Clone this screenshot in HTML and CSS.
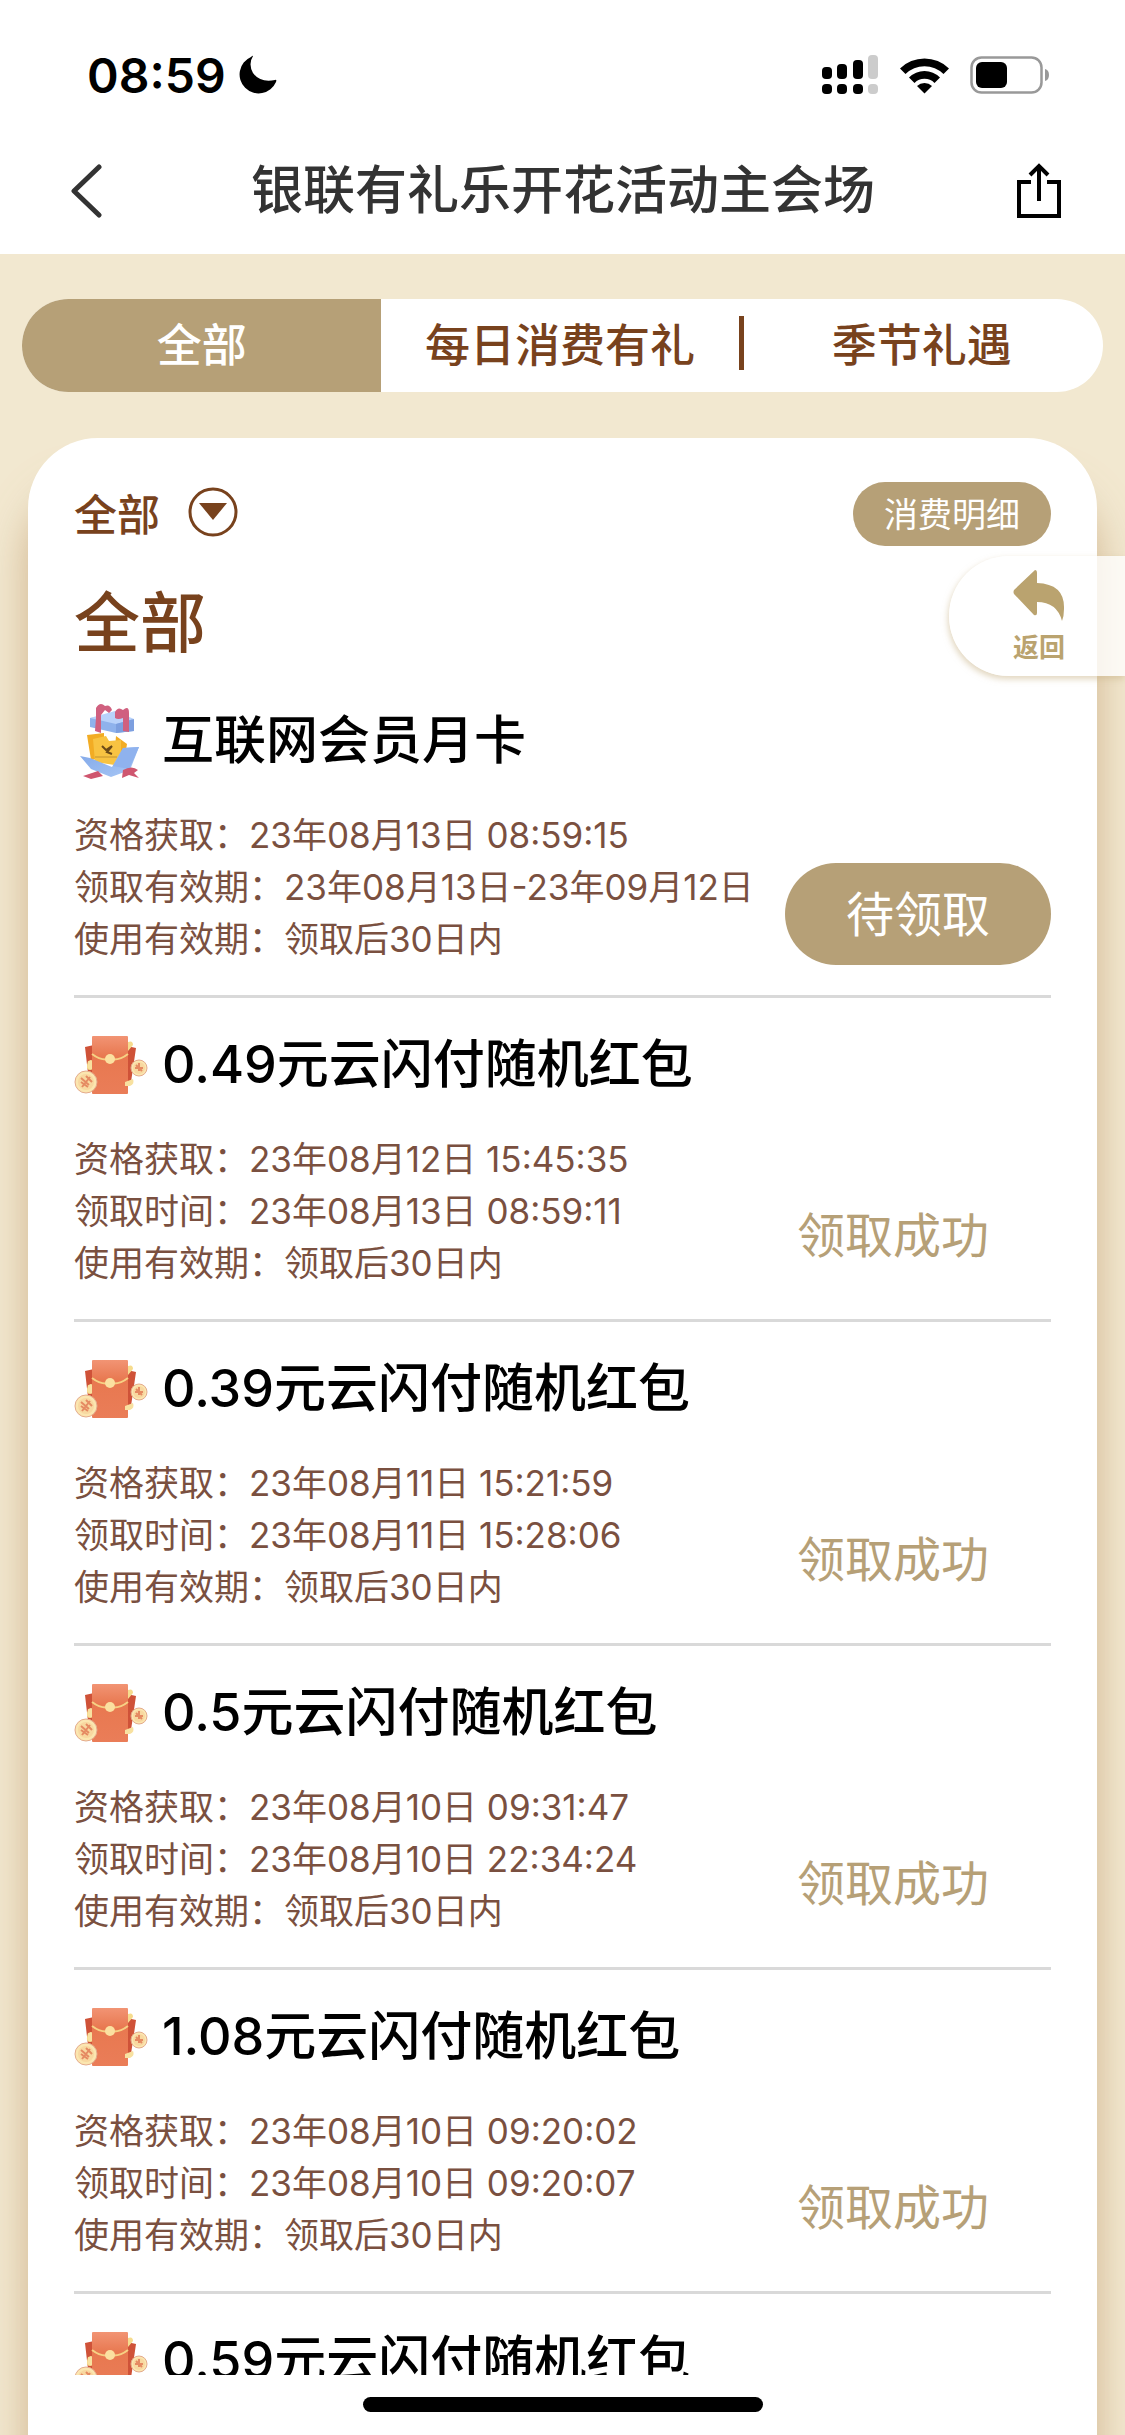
FILE: index.html
```html
<!DOCTYPE html>
<html lang="zh-CN">
<head>
<meta charset="utf-8">
<meta name="viewport" content="width=device-width">
<title>银联有礼乐开花活动主会场</title>
<link rel="stylesheet" href="styles.css">
</head>
<body>
<svg class="symbols" aria-hidden="true">
  <defs>
    <linearGradient id="red" x1="0" y1="0" x2="0" y2="1"><stop offset="0" stop-color="#f29474"/><stop offset=".35" stop-color="#e87850"/><stop offset="1" stop-color="#ea7d58"/></linearGradient>
    <linearGradient id="box" x1="0" y1="0" x2="1" y2="1"><stop offset="0" stop-color="#7fa6e8"/><stop offset="1" stop-color="#a9c8f6"/></linearGradient>
    <symbol id="packet" viewBox="0 0 74 60">
      <path d="M11 12 20 10V50H17Q15 50 15 47Z" fill="#cf5238"/>
      <path d="M62 13 53 11V50H55Q57 50 57 47Z" fill="#cf5238"/>
      <path d="M54 7q5-2 5 3l-5 6zM14 26q-3 9 2 9l4-1v-9z" fill="#f6dc8e"/>
      <rect x="18" y="1" width="36" height="58" rx="1" fill="url(#red)"/>
      <path d="M18 19Q27 26 36 24Q45 26 54 19" fill="none" stroke="#f6d184" stroke-width="2"/>
      <circle cx="36" cy="24" r="5" fill="#fbe0a0"/>
      <path d="M14 27q4-4 4 0v7q-3 1-4-2zM51 47l8-3q2 5-3 7h-5z" fill="#f8e1a0"/>
      <circle cx="12" cy="47" r="11" fill="#fbe6b0" stroke="#e4ab8c"/>
      <circle cx="12" cy="47" r="8" fill="#f8d8a0"/>
      <path d="M7 43l8 7M7 47l7 5M12 41l6 6M8 52l8-10" stroke="#e58a62" stroke-width="2"/>
      <circle cx="65" cy="33" r="8" fill="#fbe6b0" stroke="#e4ab8c"/>
      <circle cx="65" cy="33" r="6" fill="#f8d8a0"/>
      <path d="M61 33h8M62 30l6 6M65 28v8" stroke="#e58a62" stroke-width="2"/>
    </symbol>
  </defs>
</svg>

<header class="top">
  <div class="statusbar">
    <div class="clock">
      <span>08:59</span>
      <svg width="40" height="40" viewBox="0 0 40 40"><path d="M15 1Q10 9 15 18Q22 28 37 25Q39 24 38 27A19 19 0 1 1 13 2Q15 0 15 1Z"/></svg>
    </div>
    <div class="indicators">
      <svg width="57" height="40" viewBox="0 0 57 40">
        <rect x="0" y="12" width="10" height="12" rx="4"/><rect x="15" y="9" width="10" height="15" rx="4"/><rect x="31" y="5" width="10" height="19" rx="4"/>
        <rect x="0" y="29" width="10" height="10" rx="4"/><rect x="15" y="29" width="10" height="10" rx="4"/><rect x="31" y="29" width="10" height="10" rx="4"/>
        <g fill="#ccc"><rect x="46" y="0" width="10" height="24" rx="4"/><rect x="46" y="29" width="10" height="10" rx="4"/></g>
      </svg>
      <svg width="49" height="37" viewBox="0 0 49 37">
        <path d="M0 11.500A35 35 0 0 1 49 11.500L43.500 17A27 27 0 0 0 5.500 17Z"/>
        <path d="M9 20.500A22 22 0 0 1 40 20.500L34.500 26A14 14 0 0 0 14.500 26Z"/>
        <path d="M17 29A11 11 0 0 1 32 29L24.500 36.500Z"/>
      </svg>
      <svg width="80" height="38" viewBox="0 0 80 38">
        <rect x="1.500" y="1.500" width="70" height="35" rx="10" fill="none" stroke="#999" stroke-width="2.500"/>
        <rect x="6" y="6" width="31" height="26" rx="6"/>
        <path d="M75 13Q79 14 79 19T75 25Z" fill="#999"/>
      </svg>
    </div>
  </div>
  <nav class="titlebar">
    <button class="bare" aria-label="后退"><svg width="32" height="54" viewBox="0 0 32 54" fill="none" stroke="#333" stroke-width="5" stroke-linecap="round" stroke-linejoin="round"><path d="M29 3 4 27 29 51"/></svg></button>
    <h1>银联有礼乐开花活动主会场</h1>
    <button class="bare" aria-label="分享"><svg width="46" height="56" viewBox="0 0 46 56" fill="none" stroke="#000" stroke-width="4"><path d="M15 19H3V53H43V19H31"/><path d="M23 38V3M14 12 23 3 32 12"/></svg></button>
  </nav>
</header>

<main>
  <nav class="tabs">
    <button class="tab active">全部</button>
    <button class="tab">每日消费有礼</button>
    <button class="tab">季节礼遇</button>
  </nav>

  <section class="card">
    <div class="filters">
      <button class="bare filter">全部
        <svg width="50" height="50" viewBox="0 0 50 50"><circle cx="25" cy="25" r="23" fill="none" stroke="#78421d" stroke-width="3"/><path d="M11 16H39L25 33Z" fill="#78421d"/></svg>
      </button>
      <button class="detail">消费明细</button>
    </div>
    <h2>全部</h2>

    <ul class="list">
      <li class="item">
        <div class="heading">
          <svg width="74" height="76" viewBox="-6 5 74 76">
            <path d="M10 20 38 16 54 22V33L36 35 10 29Z" fill="#8fb2ec"/><path d="M10 20 35 13 54 21 36 26Z" fill="#b9d2fa"/><path d="M36 26 54 21V33L36 35Z" fill="#7d9fdf"/>
            <path d="M16 20V10Q20 3 25 8Q30 6 32 12L29 15 25 12 21 17V35L15 33Z" fill="#d0607f"/>
            <path d="M35 14Q38 8 43 12Q49 7 49 15V34L43 33V20Q38 22 35 20Z" fill="#d0607f"/>
            <path d="M7 37 24 35V60L11 62Z" fill="#f2ac24"/><path d="M36 38 47 46 44 64 34 63Z" fill="#f2ac24"/>
            <path d="M13 41 26 38 29 43 41 42 41 68 15 64Z" fill="#f8c342"/>
            <path d="M22 48l4 4 6-4-5 6 5 2" fill="none" stroke="#6b4a18" stroke-width="2"/><path d="M15 59h22" stroke="#c4922e"/>
            <path d="M0 58 10 60 32 69 43 50 59 49 50 72 31 79 11 71Z" fill="url(#box)"/><path d="M33 68 43 50 59 49 49 71Z" fill="#8fb2ee"/>
            <path d="M3 78 18 73 23 78 11 81ZM43 72Q52 67 58 72L54 75 59 80 49 77 42 80Z" fill="#cf566f"/>
          </svg>
          <h3>互联网会员月卡</h3>
        </div>
        <div class="body">
          <div class="info"><p>资格获取：23年08月13日 08:59:15</p><p>领取有效期：23年08月13日-23年09月12日</p><p>使用有效期：领取后30日内</p></div>
          <button class="claim">待领取</button>
        </div>
      </li>
      <li class="item">
        <div class="heading"><svg class="packet"><use href="#packet"/></svg><h3>0.49元云闪付随机红包</h3></div>
        <div class="body">
          <div class="info"><p>资格获取：23年08月12日 15:45:35</p><p>领取时间：23年08月13日 08:59:11</p><p>使用有效期：领取后30日内</p></div>
          <span class="done">领取成功</span>
        </div>
      </li>
      <li class="item">
        <div class="heading"><svg class="packet"><use href="#packet"/></svg><h3>0.39元云闪付随机红包</h3></div>
        <div class="body">
          <div class="info"><p>资格获取：23年08月11日 15:21:59</p><p>领取时间：23年08月11日 15:28:06</p><p>使用有效期：领取后30日内</p></div>
          <span class="done">领取成功</span>
        </div>
      </li>
      <li class="item">
        <div class="heading"><svg class="packet"><use href="#packet"/></svg><h3>0.5元云闪付随机红包</h3></div>
        <div class="body">
          <div class="info"><p>资格获取：23年08月10日 09:31:47</p><p>领取时间：23年08月10日 22:34:24</p><p>使用有效期：领取后30日内</p></div>
          <span class="done">领取成功</span>
        </div>
      </li>
      <li class="item">
        <div class="heading"><svg class="packet"><use href="#packet"/></svg><h3>1.08元云闪付随机红包</h3></div>
        <div class="body">
          <div class="info"><p>资格获取：23年08月10日 09:20:02</p><p>领取时间：23年08月10日 09:20:07</p><p>使用有效期：领取后30日内</p></div>
          <span class="done">领取成功</span>
        </div>
      </li>
      <li class="item">
        <div class="heading"><svg class="packet"><use href="#packet"/></svg><h3>0.59元云闪付随机红包</h3></div>
      </li>
    </ul>
    <div class="homebar"></div>
  </section>

  <button class="return">
    <svg width="52" height="54" viewBox="0 0 52 54"><path d="M22 1Q24 1 24 4V14Q52 15 51 40Q51 47 49 52Q44 33 24 33V44Q24 47 21 46L1 25Q0 23 1 21Z" fill="#baa36f"/></svg>
    返回
  </button>
</main>
</body>
</html>
```
FILE: styles.css
```css
* { box-sizing: border-box; margin: 0; }

body {
  display: flex;
  flex-direction: column;
  height: 100vh;
  overflow: hidden;
  background: #f2e8d0;
  color: #000;
  font-family: Inter, "Noto Sans CJK SC", sans-serif;
}

button {
  border: 0;
  padding: 0;
  background: none;
  color: inherit;
  font: inherit;
  font-family: "Noto Sans CJK SC", sans-serif;
  white-space: nowrap;
}

.bare, .clock, .indicators { display: flex; align-items: center; }
.symbols { position: absolute; width: 0; height: 0; }

.top { background: #fff; }
.statusbar {
  display: flex;
  align-items: center;
  justify-content: space-between;
  height: 128px;
  padding: 22px 75px 0 87px;
}
.clock { gap: 12px; font-size: 48px; font-weight: 600; }
.indicators { gap: 21px; }
.titlebar {
  display: flex;
  align-items: center;
  justify-content: space-between;
  height: 126px;
  padding: 0 63px 0 70px;
}
h1 { padding-left: 8px; color: #333; font-size: 52px; font-weight: 500; line-height: 60px; }

main {
  position: relative;
  display: flex;
  flex: 1;
  flex-direction: column;
  min-height: 0;
  padding: 45px 22px 0;
}

.tabs {
  display: grid;
  flex: none;
  grid-template-columns: 359fr 357fr 364fr;
  height: 93px;
  border-radius: 47px;
  background: #fff;
  overflow: hidden;
}
.tab {
  display: flex;
  align-items: center;
  justify-content: center;
  padding-bottom: 5px;
  color: #78421d;
  font-size: 45px;
  font-weight: 500;
  line-height: 88px;
}
.tab.active { background: #b6a077; color: #fff; }
.tab:last-child::before { content: ""; width: 5px; height: 54px; background: #78421d; }
.tab:last-child { justify-content: flex-start; gap: 88px; }

.card {
  display: flex;
  flex: 1;
  flex-direction: column;
  min-height: 0;
  margin: 46px 6px 0;
  padding: 44px 46px 0;
  border-radius: 70px 70px 0 0;
  background: #fff;
  box-shadow: 0 50px 40px #c09c70b0;
}
.filters { display: flex; align-items: center; justify-content: space-between; height: 64px; }
.filter { gap: 28px; padding-bottom: 4px; color: #78421d; font-size: 43px; font-weight: 500; line-height: 60px; }
.detail {
  height: 64px;
  padding: 0 31px 3px;
  border-radius: 32px;
  background: #b6a077;
  color: #fff;
  font-size: 34px;
  line-height: 60px;
}
h2 {
  height: 128px;
  padding-top: 32px;
  color: #78421d;
  font-size: 66px;
  font-weight: 500;
  line-height: 90px;
}

.list {
  flex: 1;
  min-height: 0;
  padding: 0;
  list-style: none;
  overflow-y: auto;
  scrollbar-width: none;
}
.item { padding: 29px 0 30px; border-bottom: 3px solid #d9d9d9; }
.heading { display: flex; align-items: center; gap: 14px; height: 76px; }
.packet { width: 74px; height: 60px; }
h3 { font-size: 52px; font-weight: 500; line-height: 76px; white-space: nowrap; }
.body { display: flex; align-items: flex-end; justify-content: space-between; margin-top: 30px; }
.info { color: #7a5040; font-size: 35px; line-height: 52px; white-space: nowrap; }
.claim {
  height: 102px;
  padding: 0 61px 6px;
  border-radius: 51px;
  background: #b6a077;
  color: #fff;
  font-size: 48px;
  line-height: 96px;
}
.done { padding-right: 62px; color: #b6a077; font-size: 48px; line-height: 106px; }

.homebar {
  align-self: center;
  flex: none;
  width: 400px;
  height: 15px;
  margin: 22px 0 23px;
  border-radius: 8px;
  background: #000;
}

.return {
  position: absolute;
  top: 302px;
  right: 0;
  display: flex;
  flex-direction: column;
  align-items: flex-start;
  gap: 5px;
  width: 176px;
  height: 120px;
  padding: 13px 0 0 64px;
  border-radius: 60px 0 0 60px;
  background: #ffffffc8;
  box-shadow: -1px 3px 6px #c9b48a90;
  color: #baa36f;
  font-size: 26px;
  font-weight: 700;
  line-height: 36px;
}
```
